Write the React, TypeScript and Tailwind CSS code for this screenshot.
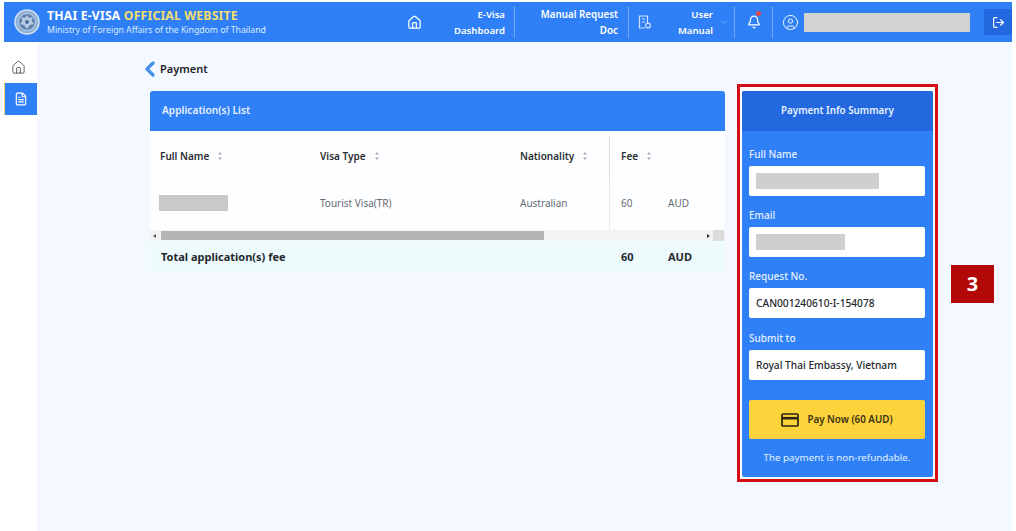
import { Bell, ChevronDown, ChevronLeft, CircleUser, FileText, Home, LogOut } from "lucide-react";

const SortIcon = () => (
  <svg width="6" height="10" viewBox="0 0 6 10" className="ml-[8px] text-[#a8adb3]">
    <path d="M3 1 5 3.5H1Z M3 9 1 6.5H5Z" fill="currentColor" />
  </svg>
);

const ManualIcon = () => (
  <svg width="16" height="16" viewBox="0 0 16 16" fill="none" stroke="currentColor" strokeWidth="1.2">
    <path d="M10.5 9V2H2.5V14H8" />
    <path d="M5 5H8M5 8H8" />
    <circle cx="11" cy="11.5" r="2.4" />
  </svg>
);

const Emblem = () => (
  <svg width="26" height="26" viewBox="0 0 26 26" className="shrink-0">
    <circle cx="13" cy="13" r="12" fill="#8fb0d8" stroke="#d5e2f2" strokeWidth="1.5" />
    <circle cx="13" cy="13" r="8.5" fill="#5f83ae" stroke="#c4d4e8" strokeWidth="1" />
    <path d="M13 6 15 9 19 8 17.5 12 20 15 16 16 13 20 10 16 6 15 8.5 12 7 8 11 9Z" fill="#b9cbe2" />
    <circle cx="13" cy="13" r="2" fill="#4a6e9c" />
  </svg>
);

const Field = ({ label, value, bar }: { label: string; value?: string; bar?: number }) => (
  <div className="mb-[11px]">
    <div className="mb-1 h-4 text-[10px] leading-4 font-medium text-[#e3f0ff]">{label}</div>
    <div className="flex h-[30px] items-center rounded-[2px] bg-white pl-[7px] text-[10.2px] font-medium text-[#24282d]">
      {value && <span className="pt-[2px]">{value}</span>}
      {bar && <div className="h-4 bg-[#cfcfcf]" style={{ width: bar }} />}
    </div>
  </div>
);

const App = () => {
  return (
    <div className="flex h-[531px] w-[1016px] flex-col overflow-hidden bg-white font-['Noto_Sans',sans-serif]">
      {/* Top bar */}
      <header className="mt-[2px] ml-[4px] flex h-10 w-[1008px] shrink-0 items-center bg-[#2f80f7] text-white">
        <div className="ml-[10px] flex w-[390px] items-center gap-[7px]">
          <Emblem />
          <div>
            <div className="text-[12.2px] leading-[15px] font-bold tracking-[0.2px]">
              THAI E-VISA <span className="text-[#f4dd6a]">OFFICIAL WEBSITE</span>
            </div>
            <div className="mt-[1px] text-[8.7px] leading-[12px] text-[#dcebff]">
              Ministry of Foreign Affairs of the Kingdom of Thailand
            </div>
          </div>
        </div>
        <div className="flex w-[20px] justify-center">
          <Home size={15} />
        </div>
        <div className="h-8 w-[91px] border-r border-[#6fa8f5] pt-[1px] pr-[9px] text-right text-[9.6px] leading-4 font-semibold">
          <div>E-Visa</div>
          <div>Dashboard</div>
        </div>
        <div className="h-8 w-[114px] border-r border-[#6fa8f5] pt-[1px] pr-[10px] text-right text-[9.8px] leading-4 font-semibold">
          <div>Manual Request</div>
          <div>Doc</div>
        </div>
        <div className="flex w-[32px] justify-center text-[#cfe2fc]">
          <ManualIcon />
        </div>
        <div className="h-8 w-[52px] pt-[1px] text-right text-[9.6px] leading-4 font-semibold">
          <div>User</div>
          <div>Manual</div>
        </div>
        <div className="flex h-8 w-[22px] items-center justify-center border-r border-[#6fa8f5] pl-[1px]">
          <ChevronDown size={7} className="text-[#a9cbf8]" />
        </div>
        <div className="relative flex h-8 w-[38px] items-center justify-center border-r border-[#6fa8f5]">
          <Bell size={14} strokeWidth={2.2} />
          <span className="absolute top-[5px] left-[21px] h-[5px] w-[5px] rounded-full bg-[#e5484d]" />
        </div>
        <div className="ml-[9px] flex items-center gap-[5px]">
          <CircleUser size={17} strokeWidth={1.3} />
          <div className="h-[19px] w-[166px] bg-[#d2d2d2]" />
        </div>
        <div className="ml-[14px] flex h-[26px] w-[28px] items-center justify-center bg-[#2468e0]">
          <LogOut size={13} strokeWidth={2.2} />
        </div>
      </header>

      <div className="flex flex-1">
        {/* Sidebar */}
        <aside className="flex w-[37px] shrink-0 flex-col items-start bg-white">
          <div className="flex h-[40px] w-[37px] items-end justify-center pb-[7px] text-[#4a4f55]">
            <Home size={15} strokeWidth={1.4} />
          </div>
          <div className="mt-[1px] ml-[4px] flex h-[32px] w-[33px] items-center justify-center border-l border-[#f2d66b] bg-[#2f80f7] text-white">
            <FileText size={14} />
          </div>
        </aside>

        {/* Page body */}
        <main className="flex w-[975px] shrink-0 items-start bg-[#f3f9fe] pt-[18px] pl-[113px]">
          <section className="w-[575px]">
            <div className="-ml-[5px] flex h-[18px] items-center text-[#1f2328]">
              <ChevronLeft size={24} strokeWidth={3.4} className="-mx-[7px] text-[#4a90e8]" />
              <span className="ml-[5px] text-[11px] font-semibold">Payment</span>
            </div>
            <div className="mt-[13px]">
              <div className="flex h-10 items-center rounded-t-[3px] bg-[#2f80f7] pl-3 text-[10.2px] font-semibold text-[#e6f1ff]">
                Application(s) List
              </div>
              <div className="bg-[#fdfeff]">
                <div className="grid grid-cols-[170px_200px_89px_59px_1fr] text-[10px]">
                  <div className="flex h-[50px] items-center pl-[10px] font-semibold text-[#2a2e33]">
                    Full Name <SortIcon />
                  </div>
                  <div className="flex h-[50px] items-center font-semibold text-[#2a2e33]">
                    Visa Type <SortIcon />
                  </div>
                  <div className="flex h-[50px] items-center font-semibold text-[#2a2e33]">
                    Nationality <SortIcon />
                  </div>
                  <div className="mt-[5px] flex h-[45px] items-center border-l border-[#dcdfe2] pb-[5px] pl-[11px] font-semibold text-[#2a2e33]">
                    Fee <SortIcon />
                  </div>
                  <div />
                  <div className="flex h-[49px] items-center pb-[5px] pl-[9px]">
                    <div className="h-4 w-[69px] bg-[#c9c9c9]" />
                  </div>
                  <div className="flex h-[49px] items-center pb-[5px] text-[#666b70]">Tourist Visa(TR)</div>
                  <div className="flex h-[49px] items-center pb-[5px] text-[#666b70]">Australian</div>
                  <div className="flex h-[49px] items-center border-l border-[#e6e8ea] pb-[5px] pl-[11px] text-[#666b70]">60</div>
                  <div className="flex h-[49px] items-center pb-[5px] text-[#666b70]">AUD</div>
                </div>
                <div className="flex h-[11px] items-center bg-[#f3f3f3]">
                  <span className="ml-[3px] h-0 w-0 border-y-[2.5px] border-r-[3px] border-y-transparent border-r-[#555]" />
                  <div className="ml-[5px] h-[9px] w-[383px] bg-[#b5b5b5]" />
                  <span className="ml-[163px] h-0 w-0 border-y-[2.5px] border-l-[3px] border-y-transparent border-l-[#333]" />
                  <div className="ml-[3px] h-[11px] w-[11px] bg-[#dcdcdc]" />
                </div>
              </div>
              <div className="grid h-[31px] grid-cols-[471px_47px_1fr] items-center bg-[#eefbfd] pt-[1px] text-[11px] font-bold text-[#24282d]">
                <div className="pl-[11px]">Total application(s) fee</div>
                <div>60</div>
                <div>AUD</div>
              </div>
            </div>
          </section>

          {/* Summary panel */}
          <div className="mt-[24px] ml-[12px] h-[398px] w-[201px] shrink-0 border-[3px] border-[#d20f16] bg-white px-[2px] pt-[4px] pb-[2px]">
            <div className="h-[386px] w-[191px] rounded-[2px] bg-[#2f80f7]">
              <div className="flex h-10 items-center justify-center rounded-t-[2px] bg-[#2468e0] text-[9.8px] font-semibold text-[#e6f1ff]">
                Payment Info Summary
              </div>
              <div className="px-[7px] pt-[15px] pr-[8px]">
                <Field label="Full Name" bar={123} />
                <Field label="Email" bar={89} />
                <div className="pb-[1px]">
                  <Field label="Request No." value="CAN001240610-I-154078" />
                </div>
                <Field label="Submit to" value="Royal Thai Embassy, Vietnam" />
                <button className="mt-[20px] flex h-[39px] w-full items-center justify-center gap-[8px] rounded-[2px] bg-[#fdd33c] pt-[1px] text-[9.8px] font-semibold text-[#3a3214]">
                  <svg width="18" height="14" viewBox="0 0 18 14" fill="none" stroke="#2b2410" strokeWidth="1.7">
                    <rect x="1" y="1" width="16" height="12" rx="1" />
                    <path d="M1 5.2H17" strokeWidth="2.6" />
                  </svg>
                  Pay Now (60 AUD)
                </button>
                <div className="mt-[11px] text-center text-[9.8px] leading-4 text-[#e3f0ff]">
                  The payment is non-refundable.
                </div>
              </div>
            </div>
          </div>

          <div className="mt-[205px] ml-[13px] flex h-[38px] w-[43px] shrink-0 items-center justify-center bg-[#b30808] text-[20px] font-bold text-white">
            3
          </div>
        </main>
      </div>
    </div>
  );
};

export default App;
